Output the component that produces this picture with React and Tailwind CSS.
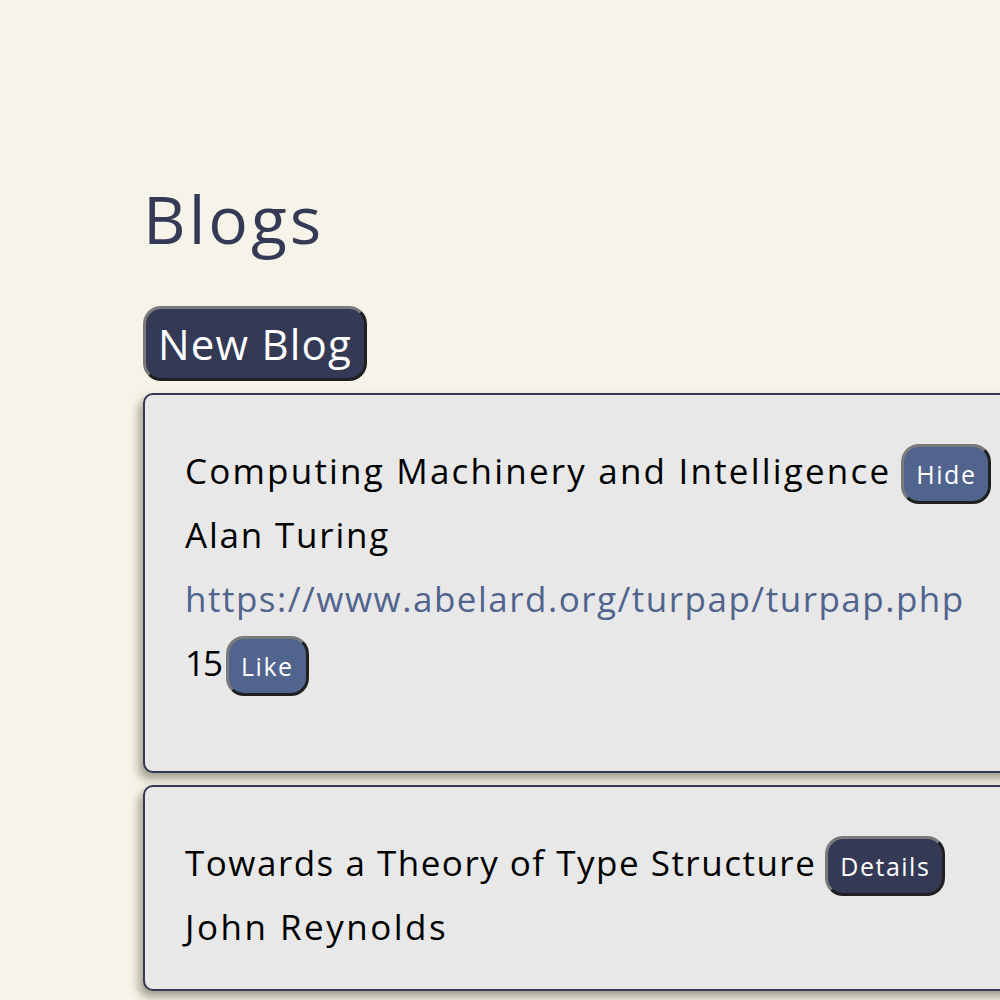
import React from "react";

const font = { fontFamily: '"Open Sans", "Liberation Sans", sans-serif' };

function Btn({ children, dark, className = "ml-[10px]" }) {
  return (
    <button
      className={`${className} mt-[5px] rounded-[18px] border-[3px] border-t-[#7a7a7a] border-l-[#7a7a7a] border-r-[#202020] border-b-[#202020] px-[12px] text-[25px] leading-[54px] tracking-[1.5px] text-white ${
        dark ? "bg-[#343a55]" : "bg-[#51648e]"
      }`}
    >
      {children}
    </button>
  );
}

function Row({ children }) {
  return <div className="flex h-[64px] items-center">{children}</div>;
}

export default function App() {
  const blogs = [
    {
      title: "Computing Machinery and Intelligence",
      author: "Alan Turing",
      url: "https://www.abelard.org/turpap/turpap.php",
      likes: 15,
      open: true,
    },
    {
      title: "Towards a Theory of Type Structure",
      author: "John Reynolds",
      open: false,
    },
  ];

  return (
    <div className="h-screen w-full overflow-hidden bg-[#f6f4e8]" style={font}>
      <div className="pl-[143px] pt-[170px]">
        <h2 className="text-[66px] leading-[96px] tracking-[3px] text-[#343a55]">Blogs</h2>

        <button className="mt-[40px] rounded-[18px] border-[3px] border-t-[#7a7a7a] border-l-[#7a7a7a] border-r-[#202020] border-b-[#202020] bg-[#343a55] px-[12px] text-[42px] leading-[69px] tracking-[1.2px] text-white">
          New Blog
        </button>

        <div className="mt-[12px] flex flex-col gap-[12px]">
          {blogs.map((b, i) => (
            <div
              key={b.title}
              className="w-[900px] rounded-[10px] border-2 border-[#343a55] bg-[#e8e8e8] pl-[40px] pt-[44px] pb-[30px] text-[35px] text-black shadow-[-4px_6px_10px_rgba(60,55,30,0.45)]"
            >
              <Row>
                <span className={i === 0 ? "tracking-[2.2px]" : "tracking-[1.5px]"}>{b.title}</span>
                <Btn dark={!b.open} className={b.open ? "ml-[10px]" : "ml-[9px]"}>
                  {b.open ? "Hide" : "Details"}
                </Btn>
              </Row>
              <Row>
                <span className={i === 0 ? "tracking-[1.8px]" : "tracking-[2.5px]"}>{b.author}</span>
              </Row>
              {b.open && (
                <>
                  <Row>
                    <a className="tracking-[1.5px] text-[#51648e]">{b.url}</a>
                  </Row>
                  <Row>
                    <span className="tracking-[-2px]">{b.likes}</span>
                    <Btn className="ml-[5px]">Like</Btn>
                  </Row>
                  <div className="h-[46px]" />
                </>
              )}
            </div>
          ))}
        </div>
      </div>
    </div>
  );
}
